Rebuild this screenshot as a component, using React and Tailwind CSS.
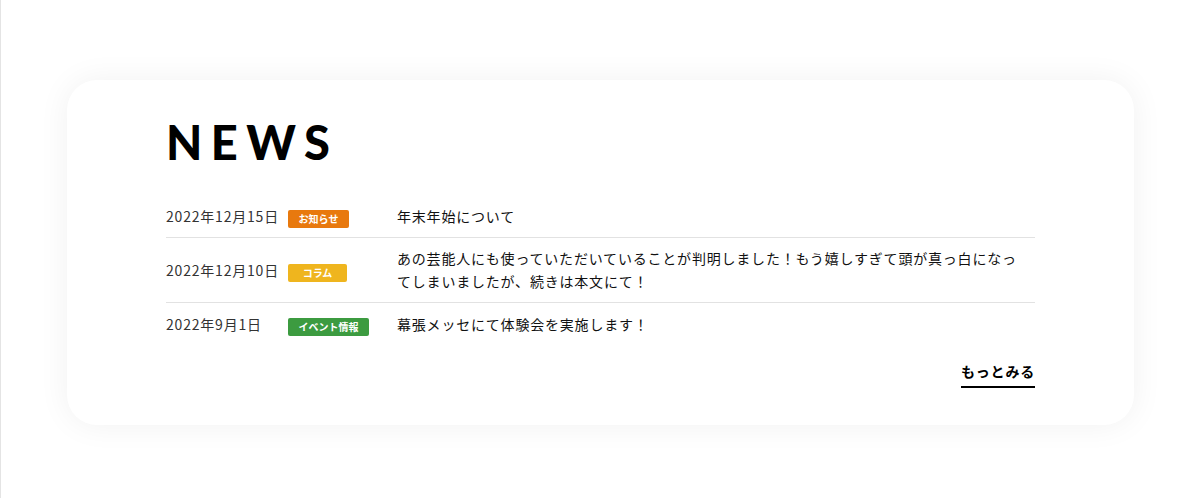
import React from 'react'

const news = [
  { date: '2022年12月15日', tag: 'お知らせ', tagClass: 'bg-[#e8790e] w-[61px]', title: '年末年始について' },
  {
    date: '2022年12月10日',
    tag: 'コラム',
    tagClass: 'bg-[#efb51e] w-[59px]',
    title: 'あの芸能人にも使っていただいていることが判明しました！もう嬉しすぎて頭が真っ白になってしまいましたが、続きは本文にて！',
  },
  { date: '2022年9月1日', tag: 'イベント情報', tagClass: 'bg-[#3c9b40] w-[81px]', title: '幕張メッセにて体験会を実施します！' },
]

function NewsRow({ item, last }) {
  return (
    <li className={`flex items-center py-[9px] ${last ? '' : 'border-b border-[#e2e2e2]'}`}>
      <span className="w-[122px] shrink-0 text-[14px] text-[#333]">{item.date}</span>
      <span className="w-[109px] shrink-0">
        <span className={`inline-flex h-[18px] items-center justify-center rounded-[2px] text-[10px] font-bold tracking-normal text-white ${item.tagClass}`}>
          {item.tag}
        </span>
      </span>
      <p className="flex-1 pr-2 text-[14px] leading-[23px] text-[#111]">{item.title}</p>
    </li>
  )
}

export default function App() {
  return (
    <div
      className="min-h-screen border-l border-[#e4e4e4] bg-white pt-[80px] tracking-[0.05em]"
      style={{ fontFamily: '"Noto Sans CJK JP", "Noto Sans", sans-serif' }}
    >
      <section className="mx-[66px] rounded-[30px] bg-white px-[99px] pb-[37px] pt-[34px] shadow-[0_0_32px_rgba(0,0,0,0.06)]">
        <h2
          className="text-[47px] font-black leading-[56px] tracking-[0.18em] text-black"
          style={{ fontFamily: 'Lato, "Liberation Sans", sans-serif' }}
        >
          NEWS
        </h2>
        <ul className="mt-[25px]">
          {news.map((item, i) => (
            <NewsRow key={item.date} item={item} last={i === news.length - 1} />
          ))}
        </ul>
        <div className="mt-[16px] flex justify-end">
          <a href="#" className="border-b-2 border-black pb-[4px] text-[14px] font-bold text-black">
            もっとみる
          </a>
        </div>
      </section>
    </div>
  )
}
